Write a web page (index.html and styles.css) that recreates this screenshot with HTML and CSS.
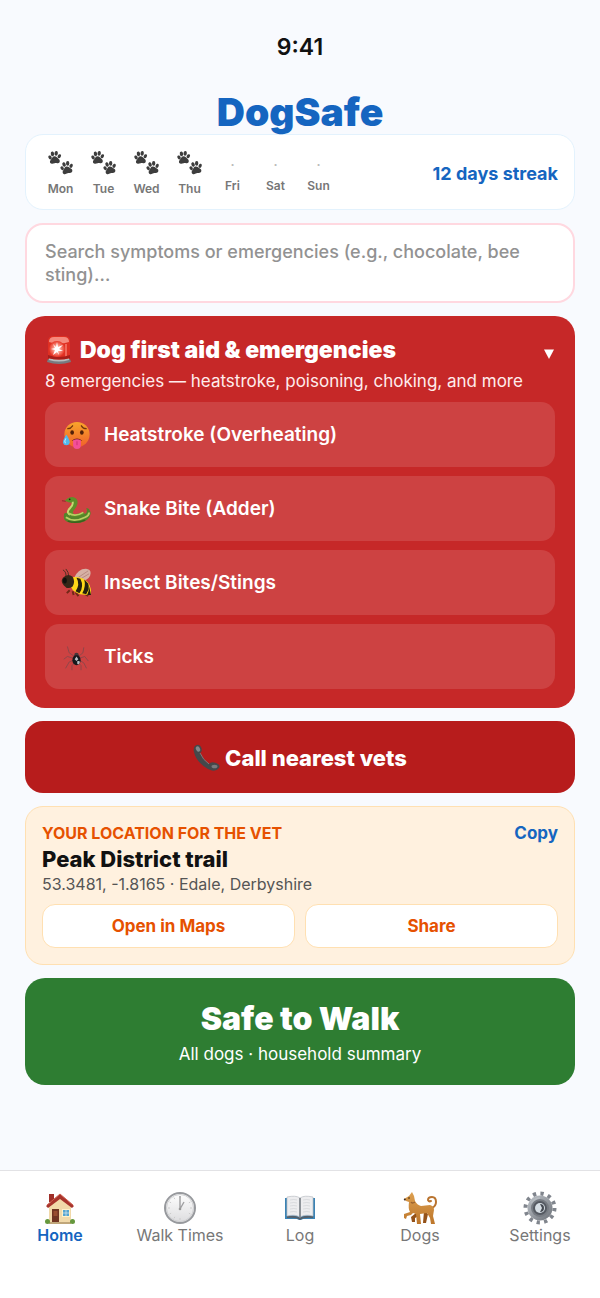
FILE: index.html
```html
<!DOCTYPE html>
<html lang="en">
<head>
<meta charset="utf-8">
<meta name="viewport" content="width=device-width, initial-scale=1">
<title>DogSafe</title>
<link rel="stylesheet" href="styles.css">
</head>
<body>
<svg class="defs" aria-hidden="true">
  <defs>
    <linearGradient id="skin" x1="0" y1="0" x2="0" y2="1"><stop offset="0" stop-color="#f9a52b"/><stop offset="1" stop-color="#f0602a"/></linearGradient>
    <linearGradient id="steel" x1="0" y1="0" x2="1" y2="1"><stop offset="0" stop-color="#bfc4ca"/><stop offset="1" stop-color="#6c7178"/></linearGradient>
    <linearGradient id="face" x1="0" y1="0" x2="0" y2="1"><stop offset="0" stop-color="#ffffff"/><stop offset="1" stop-color="#dcdcde"/></linearGradient>
    <linearGradient id="fur" x1="0" y1="0" x2="0" y2="1"><stop offset="0" stop-color="#dda050"/><stop offset="1" stop-color="#bd762b"/></linearGradient>
    <radialGradient id="lamp"><stop offset="0" stop-color="#ffffff"/><stop offset=".3" stop-color="#ffb3a5"/><stop offset="1" stop-color="#e73525"/></radialGradient>
    <g id="print">
      <ellipse cx="2.2" cy="7" rx="1.7" ry="2.2" transform="rotate(-25 2.2 7)"/>
      <ellipse cx="4.8" cy="3.2" rx="1.8" ry="2.5" transform="rotate(-10 4.8 3.2)"/>
      <ellipse cx="8.8" cy="2.6" rx="1.8" ry="2.5" transform="rotate(10 8.8 2.6)"/>
      <ellipse cx="12.2" cy="5.6" rx="1.7" ry="2.3" transform="rotate(30 12 5.6)"/>
      <path d="M7 5.800c2.300 0 3 1.700 4.500 2.900 2 1.600 1.400 4.300-.8 4.500-1.500.2-2.200-.3-3.500 0-1.500.3-2.300 1-3.800.4-1.900-.8-1.500-3-.3-4.200C4.500 8 4.800 5.800 7 5.800z"/>
    </g>
    <symbol id="paws" viewBox="0 0 28 26">
      <g fill="#3d3d3d"><use href="#print" transform="translate(0 0)"/><use href="#print" transform="translate(13 11) rotate(-8 7 7)"/></g>
    </symbol>
  </defs>
</svg>

<header class="top">
  <div class="clock">9:41</div>
  <h1 class="brand">DogSafe</h1>
</header>

<main class="content">
  <section class="streak" aria-label="Walk streak">
    <ul class="days">
      <li class="day"><svg class="paws"><use href="#paws"/></svg>Mon</li>
      <li class="day"><svg class="paws"><use href="#paws"/></svg>Tue</li>
      <li class="day"><svg class="paws"><use href="#paws"/></svg>Wed</li>
      <li class="day"><svg class="paws"><use href="#paws"/></svg>Thu</li>
      <li class="day"><span class="dot">·</span>Fri</li>
      <li class="day"><span class="dot">·</span>Sat</li>
      <li class="day"><span class="dot">·</span>Sun</li>
    </ul>
    <strong class="streak-total">12 days streak</strong>
  </section>

  <textarea class="search" rows="2" aria-label="Search symptoms or emergencies" placeholder="Search symptoms or emergencies (e.g., chocolate, bee sting)…"></textarea>

  <section class="aid">
    <button class="aid-head" type="button" aria-expanded="true">
      <span class="aid-title">
        <svg class="siren" viewBox="0 0 28 30" aria-hidden="true">
          <path d="M3 24h22l1 3q-12 4-24 0z" fill="#777b80"/><path d="M4 22h20v3q-10 3-20 0z" fill="#b9bcbe"/>
          <path d="M3 23V6q0-5 6-5h10q6 0 6 5v17q-11 3-22 0z" fill="#df3023"/>
          <path d="M4 7q0-5 5-5h10q5 0 5 5-10 3-20 0z" fill="#f58a7d"/>
          <path d="M20 9h2v12l-2 1z" fill="#f0685a"/><path d="M3 20q11 4 22 0v3q-11 3-22 0z" fill="#a81e19"/>
          <circle cx="12" cy="14" r="8" fill="url(#lamp)"/>
          <path d="M12 7l1 5 5-2-4 4 4 2-5 0 1 4-2-3-4 3 2-5-4-1 4-1-2-4 3 3z" fill="#fff"/>
        </svg>
        <span class="aid-name">Dog first aid &amp; emergencies</span>
        <svg class="caret" viewBox="0 0 10 10" aria-hidden="true"><path d="M0 .5h10L5 10z" fill="#fff"/></svg>
      </span>
      <span class="aid-sub">8 emergencies — heatstroke, poisoning, choking, and more</span>
    </button>
    <button class="aid-item" type="button">
      <svg class="item-icon" viewBox="0 -1 32 32" aria-hidden="true">
        <circle cx="16.500" cy="15" r="13" fill="url(#skin)"/>
        <path d="M7 9q3 0 5-3M21 6q2 3 5 3" fill="none" stroke="#71370c" stroke-width="1.300" stroke-linecap="round"/>
        <ellipse cx="11.500" cy="13" rx="1.900" ry="2.300" fill="#532009"/><ellipse cx="21.500" cy="13" rx="1.900" ry="2.300" fill="#532009"/>
        <path d="M11 21.500q5.500-4.500 11 0z" fill="#66200f"/>
        <path d="M12.500 21q4-2 8 0v4.500q0 4.500-4 4.500t-4-4.500z" fill="#f34f98"/><path d="M16.500 22v4" stroke="#ce2e75"/>
        <path d="M5.500 15q4 6 3.500 8.500-.6 2.700-3.500 2.700T2 23.500Q1.700 21 5.500 15z" fill="#51b8ee"/><path d="M5 19q-2 3-.5 5" fill="none" stroke="#c9f0ff"/>
      </svg>
      Heatstroke (Overheating)
    </button>
    <button class="aid-item" type="button">
      <svg class="item-icon" viewBox="0 -1 32 32" aria-hidden="true">
        <path d="M1 7l4 .5" stroke="#8d2629" stroke-width="1"/>
        <path d="M4 7q3-4 8-4 6 1 5 7-1 4-4 7-2 3 1 4l10-2 1 4-10 4q-10 0-9-7 0-3 4-6 3-3 1-5-3 0-7-2z" fill="#5e9129"/>
        <path d="M12 8q1 3-3 7-4 4 0 7" fill="none" stroke="#c8d873" stroke-width="2"/>
        <path d="M3 22q-1 6 6 7.500 11 2 18-3 5-4 3-9-1-3-4-3 2 4-1 6-5 3-11 3-6 0-8-4-3 0-3 2.500z" fill="#54852a"/>
        <path d="M5 24q8 6 20 0 4-2 4-5M8 20q7 4 15-1" fill="none" stroke="#b9ce62" stroke-width="1.800"/>
        <path d="M7 28q9 3 18-1" fill="none" stroke="#38611d" stroke-width="1.500"/><circle cx="9" cy="5.500" r=".9" fill="#222c10"/>
      </svg>
      Snake Bite (Adder)
    </button>
    <button class="aid-item" type="button">
      <svg class="item-icon" viewBox="0 0 32 32" aria-hidden="true">
        <path d="M5 11Q6 5 2 3M8 10Q8 5 5 2" fill="none" stroke="#493021" stroke-width="1"/>
        <path d="M13 12Q18 1 27 2q5 1 3 7-2 5-12 6z" fill="#d7b1a5"/><path d="M16 12l12-8M19 13l10-6" stroke="#a7776d" stroke-width=".7"/>
        <path d="M9 24l-3 3M15 26l3 4M22 26l6 4M12 25l1 4" stroke="#722716" stroke-width="2"/>
        <path d="M10 11q6-2 13 1 9 5 8 16-10 2-16-2-7-4-5-15z" fill="#ffd818"/>
        <path d="M16 11q4 7-1 14l4 2q5-7 1-15zM24 13q2 7-2 14l4 1q4-6 2-11zM29 20l2 9-4 0q2-4 2-9z" fill="#25200f"/>
        <path d="M2 11q5-5 10-1 3 5 0 10-5 4-9-1-4-4-1-8z" fill="#342718"/><ellipse cx="4" cy="14" rx="2" ry="3" fill="#10100d"/>
      </svg>
      Insect Bites/Stings
    </button>
    <button class="aid-item" type="button">
      <svg class="item-icon" viewBox="-1 -3 34 34" aria-hidden="true">
        <g fill="none" stroke="#8a464a" stroke-width="1"><path d="M14 14l-6-4-2-7M13 16l-7-2-4 3M13 18l-5 2-4 7M15 20l-4 4 0 5M18 14l5-4 1-6M19 16l6-2 4 5M19 18l5 3 3 6M17 20l4 4 0 5"/></g>
        <circle cx="16" cy="12.500" r="2.500" fill="#453639"/><ellipse cx="16" cy="18" rx="4.500" ry="5.500" fill="#17191d"/><path d="M16 14l2 3-2 2-2-2zM17 19q4-1 2 3-3 2-2-3z" fill="#b8bec5"/>
      </svg>
      Ticks
    </button>
  </section>

  <button class="call" type="button">
    <svg class="phone" viewBox="0 0 28 28" aria-hidden="true">
      <path d="M2 2q4-3 6 1 2 4-1 6 3 7 9 11 2-3 7-1 5 2 3 5-4 5-11 1Q3 18 1 8 0 4 2 2z" fill="#45484a"/>
      <path d="M7 9q3 7 9 11" fill="none" stroke="#777b7d" stroke-width="1"/>
      <ellipse cx="5" cy="5" rx="2" ry="2.800" transform="rotate(-25 5 5)" fill="#85898b"/><ellipse cx="21.500" cy="22.500" rx="3" ry="1.800" fill="#777b7d"/>
    </svg>
    Call nearest vets
  </button>

  <section class="place">
    <div class="place-top"><h2 class="place-label">YOUR LOCATION FOR THE VET</h2><button class="copy" type="button">Copy</button></div>
    <p class="place-name">Peak District trail</p>
    <p class="place-coords">53.3481, -1.8165 · Edale, Derbyshire</p>
    <div class="place-actions"><button class="action" type="button">Open in Maps</button><button class="action" type="button">Share</button></div>
  </section>

  <button class="safe" type="button"><span class="safe-title">Safe to Walk</span><span class="safe-sub">All dogs · household summary</span></button>
</main>

<nav class="tabs" aria-label="Main">
  <a class="tab active" href="#home" aria-current="page">
    <svg class="tab-icon" viewBox="0 0 34 34" aria-hidden="true">
      <path d="M6 3h5v8H6z" fill="#9f2f29"/><path d="M6 14L17 6l11 8v18H6z" fill="#f1d9a9"/>
      <path d="M3 15L17 3l14 12-2 2L17 8 5 17z" fill="#a8342c"/><path d="M4 14L17 3l13 11" fill="none" stroke="#d06050" stroke-width="1"/>
      <path d="M9 18h7v14H9z" fill="#703522"/><path d="M10.500 20h4v5h-4z" fill="#984d2f"/><path d="M19 18h8v8h-8z" fill="#fff1c9"/><path d="M20 19h6v6h-6z" fill="#55a4cf"/><path d="M23 19v6M20 22h6" stroke="#dbebee" stroke-width=".7"/>
      <path d="M6 31h22v2H6z" fill="#c0a67a"/><circle cx="4.500" cy="30.500" r="2.500" fill="#65983d"/><circle cx="29.500" cy="30.500" r="2.500" fill="#65983d"/>
    </svg>Home
  </a>
  <a class="tab" href="#walks">
    <svg class="tab-icon" viewBox="0 0 34 34" aria-hidden="true"><circle cx="17" cy="17" r="15" fill="url(#face)" stroke="#97999d" stroke-width="2"/><circle cx="17" cy="17" r="13.500" fill="none" stroke="#cfd0d2"/><path d="M17 5v2M17 27v2M5 17h2M27 17h2M11 6.600l.8 1.500M27.400 11l-1.500.8M27.400 23l-1.500-.8M11 27.400l.8-1.500M6.600 11l1.500.8M6.600 23l1.500-.8" stroke="#ccc"/><path d="M17 18V5M17 18l4-7" stroke="#a0a0a2" stroke-width="1.400"/><circle cx="17" cy="18" r="1.300" fill="#999"/></svg>Walk Times
  </a>
  <a class="tab" href="#log">
    <svg class="tab-icon" viewBox="0 0 34 34" aria-hidden="true"><path d="M2 7h30v21H20q-3 2-6 0H2z" fill="#3c83b4"/><path d="M4 25q9-1 13 2 4-3 13-2v2q-9-1-13 2-4-3-13-2z" fill="#555f69"/><path d="M4 6q9-2 13 1v19q-5-3-13-1zM30 6q-9-2-13 1v19q5-3 13-1z" fill="#ededef" stroke="#b9bdc3" stroke-width=".7"/><path d="M7 9q4-1 7 0M7 12q4-1 7 0M7 15q4-1 7 0M7 18q4-1 7 0M7 21q4-1 7 0M20 9q4-1 7 0M20 12q4-1 7 0M20 15q4-1 7 0M20 18q4-1 7 0M20 21q4-1 7 0" fill="none" stroke="#d0d2d6" stroke-width=".7"/><path d="M17 7v20" stroke="#777d83" stroke-width="1.500"/></svg>Log
  </a>
  <a class="tab" href="#dogs">
    <svg class="tab-icon" viewBox="0 0 34 34" aria-hidden="true">
      <path d="M29 17q4-2 4-6 0-5-4-5-4 0-4 3 1 2 3 1" fill="none" stroke="#b97430" stroke-width="2" stroke-linecap="round"/>
      <path d="M21 20l-1 12h3l2-9zM13 22l-5 4 1 5h3v-4l5-3z" fill="#945219"/>
      <path d="M1 8l5-3 3-4 2 4 1 5q2 4 6 5l9-1q4 1 4 5l-1 6 2 8h-4l-1-6-3-5-7 1 1 10h-4l-1-10-3-1-2 2-4 1-1 3-2-1v-4l6-2q-2-3-1-10l-3-1-1-1z" fill="url(#fur)"/>
      <path d="M8 11q1 2 4 0" fill="none" stroke="#99612f" stroke-width="1.300"/><circle cx="1.800" cy="8.500" r="1" fill="#3d291d"/><circle cx="6" cy="7" r=".8" fill="#33200f"/>
    </svg>Dogs
  </a>
  <a class="tab" href="#settings">
    <svg class="tab-icon" viewBox="0 0 34 34" aria-hidden="true"><circle cx="17" cy="17" r="14.500" fill="none" stroke="#80858d" stroke-width="4" stroke-dasharray="3.300 4.290"/><circle cx="17" cy="17" r="12.500" fill="url(#steel)"/><circle cx="17" cy="17" r="9" fill="#777c83"/><circle cx="17" cy="17" r="7" fill="#555a62"/><circle cx="17" cy="17" r="5" fill="#d7dfe5"/><path d="M17 13q4 0 4 4t-4 4l2-4z" fill="#454a52"/><path d="M8 12q4-5 9-5" fill="none" stroke="#b7bcc1" stroke-width="1.300"/></svg>Settings
  </a>
</nav>
</body>
</html>
```

FILE: styles.css
```css
* { box-sizing: border-box; }
body {
  margin: 0;
  min-height: 100vh;
  display: flex;
  flex-direction: column;
  background: #f8fafe;
  color: #111;
  font-family: Inter, "Liberation Sans", sans-serif;
}
button, textarea { font: inherit; color: inherit; }
button { border: 0; padding: 0; background: none; cursor: pointer; }
h1, h2, p, ul { margin: 0; padding: 0; }
svg { flex: none; }
.defs { position: absolute; width: 0; height: 0; }

/* The title's descender hangs over the first card. */
.top { position: relative; z-index: 1; padding-top: 32px; text-align: center; }
.clock { font-size: 23px; line-height: 30px; font-weight: 600; }
.brand { margin-top: 28px; font-size: 39px; line-height: 44px; font-weight: 900; color: #1565c0; }

.content { flex: 1; display: flex; flex-direction: column; gap: 13px; padding: 0 25px 24px; }

.streak {
  display: flex; align-items: center; justify-content: space-between;
  min-height: 76px; padding: 12px 16px 8px 13px;
  background: #fff; border: 1px solid #e3f2fd; border-radius: 18px;
}
.days { display: flex; align-items: center; list-style: none; }
.day {
  width: 43px; display: flex; flex-direction: column; align-items: center;
  font-size: 12px; line-height: 18px; font-weight: 600; color: #777;
}
.paws { width: 26px; height: 26px; margin-bottom: 4px; }
.dot { font-size: 16px; line-height: 24px; font-weight: 400; color: #bbb; }
.streak-total { font-size: 18px; line-height: 24px; font-weight: 700; color: #1565c0; }

.search {
  display: block; width: 100%; height: 80px; padding: 15px 18px; resize: none; overflow: hidden;
  background: #fff; border: 2px solid #ffd8e0; border-radius: 18px;
  font-size: 18px; line-height: 23px; font-weight: 500;
}
.search::placeholder { color: #929292; opacity: 1; }

.aid { display: flex; flex-direction: column; gap: 9px; padding: 19px 20px; background: #c62828; border-radius: 20px; color: #fff; }
.aid-head { display: flex; flex-direction: column; gap: 4px; text-align: left; }
.aid-title { display: flex; align-items: center; align-self: stretch; font-size: 23px; line-height: 30px; font-weight: 900; }
.siren { width: 28px; height: 30px; margin-right: 7px; }
.aid-name { flex: 1; }
.caret { align-self: flex-end; width: 10px; height: 10px; margin: 0 1px 6px 0; }
.aid-sub { font-size: 17px; line-height: 24px; color: #ffecec; }
.aid-item {
  display: flex; align-items: center; gap: 12px; min-height: 65px; padding: 0 16px;
  background: #cd4242; border-radius: 14px; font-size: 19px; line-height: 24px; font-weight: 600; text-align: left;
}
.item-icon { width: 31px; height: 31px; }

.call {
  display: flex; align-items: center; justify-content: center; gap: 4px; min-height: 72px; padding-top: 2px;
  background: #b71c1c; border-radius: 18px; color: #fff; font-size: 22px; line-height: 30px; font-weight: 800;
}
.phone { width: 28px; height: 28px; }

.place { padding: 16px; background: #fff1df; border: 1px solid #ffe0b2; border-radius: 18px; }
.place-top { display: flex; align-items: center; justify-content: space-between; }
.place-label { font-size: 16px; line-height: 20px; font-weight: 700; color: #e65100; }
.copy { font-size: 17px; line-height: 20px; font-weight: 700; color: #1565c0; }
.place-name { margin-top: 2px; font-size: 22px; line-height: 28px; font-weight: 800; }
.place-coords { font-size: 16px; line-height: 22px; color: #555; }
.place-actions { display: grid; grid-template-columns: 1fr 1fr; gap: 10px; margin-top: 9px; }
.action {
  min-height: 44px; background: #fff; border: 1px solid #ffe0b2; border-radius: 13px;
  font-size: 17px; line-height: 22px; font-weight: 700; color: #e65100;
}

.safe { display: flex; flex-direction: column; align-items: center; gap: 2px; padding: 19px; background: #2e7d32; border-radius: 20px; color: #fff; }
.safe-title { font-size: 32px; line-height: 44px; font-weight: 900; }
.safe-sub { font-size: 17px; line-height: 23px; }

.tabs { display: grid; grid-template-columns: repeat(5, 1fr); padding: 20px 0 53px; background: #fff; border-top: 1px solid #e2e2e5; }
.tab { display: flex; flex-direction: column; align-items: center; font-size: 16px; line-height: 20px; color: #777; text-decoration: none; }
.tab-icon { width: 34px; height: 34px; }
.active { color: #1565c0; font-weight: 600; }
```
